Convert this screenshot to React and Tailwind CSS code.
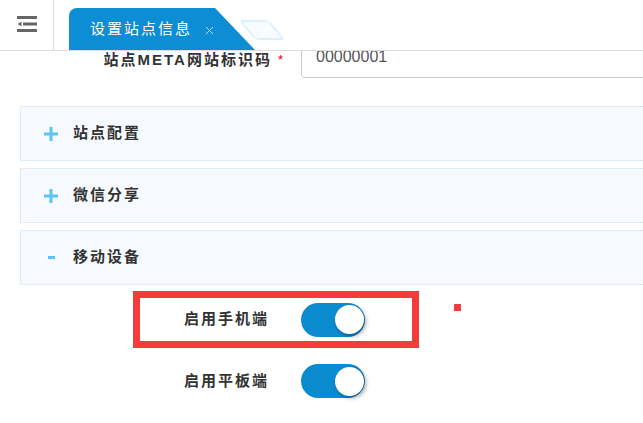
import React from "react";
import { X } from "lucide-react";

const font = { fontFamily: '"Liberation Sans", "Noto Sans CJK SC", sans-serif' };

// Collapsible section header
function Panel({ title, open }) {
  return (
    <div className="h-[55px] flex items-center border border-dotted border-[#c6dff3] bg-[#f6faff] pl-[23px]">
      <span className="w-[14px] flex justify-center">
        {open ? (
          <span className="block w-[7px] h-[3px] bg-[#5cc2fa]" />
        ) : (
          <svg width="14" height="14" viewBox="0 0 14 14">
            <rect x="0" y="5.5" width="14" height="3" fill="#5cc2fa" />
            <rect x="5.5" y="0" width="3" height="14" fill="#5cc2fa" />
          </svg>
        )}
      </span>
      <span className="ml-[15px] text-[15px] font-bold tracking-[2px] text-[#333]">{title}</span>
    </div>
  );
}

function Toggle() {
  return (
    <div className="w-[64px] h-[34px] rounded-full bg-[#0b8bcf] flex items-center justify-end pr-[1px]">
      <div className="w-[29px] h-[29px] rounded-full bg-white shadow-[2px_2px_4px_rgba(0,0,0,0.35)]" />
    </div>
  );
}

export default function App() {
  return (
    <div className="w-[643px] h-[423px] bg-white overflow-hidden flex flex-col" style={font}>
      {/* Header / tab strip */}
      <div className="h-[51px] flex border-b border-[#dddddd] shrink-0 relative z-10 bg-white">
        <div className="w-[54px] h-full border-r border-[#dddddd] flex items-center justify-center pb-[3px]">
          <svg width="20" height="16" viewBox="0 0 20 16">
            <rect x="0" y="0" width="20" height="3" fill="#666" />
            <rect x="6" y="6.5" width="14" height="3" fill="#666" />
            <polygon points="0.5,8 4.5,5.5 4.5,10.5" fill="#666" />
            <rect x="0" y="13" width="20" height="3" fill="#666" />
          </svg>
        </div>
        <div className="ml-[15px] flex items-end">
          <div className="h-[42px] flex items-center bg-[#0d8dd3] rounded-tl-[8px] pl-[21px] pr-[2px] w-[146px]">
            <span className="text-white text-[15px] tracking-[2px] whitespace-nowrap">设置站点信息</span>
            <X size={13} strokeWidth={1.6} className="text-[#d3eaf8] ml-[11px] mt-[3px] shrink-0" />
          </div>
          <div className="w-0 h-0 border-t-[42px] border-t-transparent border-l-[40px] border-l-[#0d8dd3]" />
          <div className="ml-[-8px] mb-[10px] w-[30px] h-[20px] skew-x-[40deg] rounded-[4px] border-2 border-[#dcf0fc] bg-[#f7fcff]" />
        </div>
      </div>

      {/* Scrolled content */}
      <div className="flex-1 overflow-hidden">
        <div className="-mt-[9px] flex items-center h-[36px]">
          <div className="w-[283px] flex justify-end items-center">
            <span className="text-[15px] font-bold tracking-[2px] text-[#333]">站点META网站标识码</span>
            <span className="ml-[6px] text-[#d00] text-[13px]">*</span>
          </div>
          <div className="ml-[18px] flex-1 -mr-[20px] h-[36px] border border-[#cccccc] rounded-bl-[4px] flex items-center pl-[14px] pb-[6px] text-[16px] text-[#555]">
            00000001
          </div>
        </div>

        <div className="ml-[20px] -mr-[20px] mt-[28px] flex flex-col gap-[7px]">
          <Panel title="站点配置" />
          <Panel title="微信分享" />
          <Panel title="移动设备" open />
        </div>

        <div className="ml-[133px] mt-[6px] flex items-start">
          <div className="w-[286px] h-[57px] border-[7px] border-[#f53b3b] flex items-center">
            <span className="w-[129px] text-right text-[15px] font-bold tracking-[2px] text-[#333]">启用手机端</span>
            <div className="ml-[32px]">
              <Toggle />
            </div>
          </div>
          <div className="ml-[35px] mt-[13px] w-[7px] h-[7px] bg-[#f53b3b]" />
        </div>

        <div className="ml-[140px] mt-[16px] flex items-center">
          <span className="w-[129px] text-right text-[15px] font-bold tracking-[2px] text-[#333]">启用平板端</span>
          <div className="ml-[32px]">
            <Toggle />
          </div>
        </div>
      </div>
    </div>
  );
}
